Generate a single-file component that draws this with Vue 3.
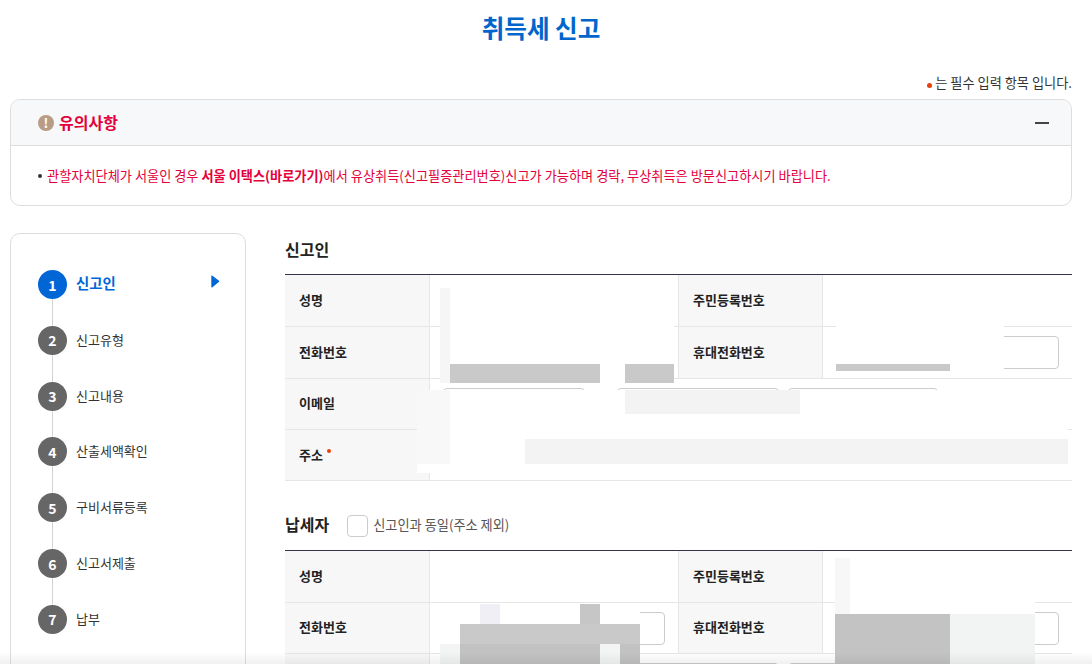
<script setup>
const steps = ['신고인', '신고유형', '신고내용', '산출세액확인', '구비서류등록', '신고서제출', '납부']

const masks = [
  [440, 288, 10, 95, '#f6f6f6'],
  [450, 288, 224, 76, '#fff'],
  [450, 364, 150, 19, '#c9c9c9'],
  [600, 364, 25, 19, '#fff'],
  [625, 364, 49, 19, '#c9c9c9'],
  [450, 383, 224, 3, '#fff'],
  [836, 320, 168, 44, '#fff'],
  [836, 364, 114, 7, '#c9c9c9'],
  [950, 364, 54, 7, '#fff'],
  [836, 371, 168, 6, '#fff'],
  [417, 390, 33, 74, '#f8f8f8'],
  [417, 464, 33, 9, '#fff'],
  [450, 390, 618, 74, '#fff'],
  [625, 390, 175, 24, '#f3f3f3'],
  [525, 439, 543, 25, '#f3f3f3'],
  [440, 603, 200, 41, '#fff'],
  [480, 604, 20, 20, '#f0eff5'],
  [580, 604, 20, 20, '#c6c6c6'],
  [460, 624, 180, 20, '#c9c9c9'],
  [440, 644, 20, 20, '#f3f5f5'],
  [460, 644, 140, 20, '#c1c2c1'],
  [600, 644, 20, 20, '#f3f5f5'],
  [620, 644, 20, 20, '#c1c2c1'],
  [835, 558, 15, 56, '#f7f7f7'],
  [850, 558, 185, 56, '#fff'],
  [835, 614, 115, 50, '#c2c3c2'],
  [950, 614, 85, 50, '#f2f4f4'],
]

function maskStyle(m) {
  return { left: m[0] + 'px', top: m[1] + 'px', width: m[2] + 'px', height: m[3] + 'px', background: m[4] }
}
</script>

<template>
  <div class="page">
    <h1 class="title">취득세 신고</h1>
    <p class="note"><i class="dot"></i>는 필수 입력 항목 입니다.</p>

    <section class="notice">
      <header class="notice-head">
        <span class="warn">!</span>
        <strong>유의사항</strong>
        <i class="minus"></i>
      </header>
      <div class="notice-body">
        <i class="bullet"></i>
        <p>관할자치단체가 서울인 경우 <b>서울 이택스(바로가기)</b>에서 유상취득(신고필증관리번호)신고가 가능하며 경락, 무상취득은 방문신고하시기 바랍니다.</p>
      </div>
    </section>

    <div class="content">
      <aside class="side">
        <ol class="steps">
          <li v-for="(s, i) in steps" :key="s" class="step" :class="{ on: i === 0 }">
            <span class="num">{{ i + 1 }}</span>
            <span class="label">{{ s }}</span>
            <svg v-if="i === 0" class="arrow" width="9" height="13" viewBox="0 0 9 13">
              <path d="M1 1.2 7.6 6.2 1 11.8Z" fill="#0066d6" stroke="#0066d6" stroke-width="1.4" stroke-linejoin="round" />
            </svg>
          </li>
        </ol>
      </aside>

      <main class="main">
        <div class="sec-head"><h2>신고인</h2></div>
        <div class="table">
          <div class="row">
            <div class="th">성명</div><div class="td"></div>
            <div class="th th2">주민등록번호</div><div class="td"></div>
          </div>
          <div class="row">
            <div class="th">전화번호</div>
            <div class="td"><span class="input"></span></div>
            <div class="th th2">휴대전화번호</div>
            <div class="td"><span class="input wide"></span></div>
          </div>
          <div class="row short">
            <div class="th raised">이메일</div>
            <div class="td full mail">
              <span class="input m1"></span>
              <span class="input m2"></span>
              <span class="input m3"></span>
            </div>
          </div>
          <div class="row short">
            <div class="th">주소<i class="dot req"></i></div>
            <div class="td full"></div>
          </div>
        </div>

        <div class="sec-head second">
          <h2>납세자</h2>
          <label class="check"><span class="box"></span><span class="check-text">신고인과 동일(주소 제외)</span></label>
        </div>
        <div class="table">
          <div class="row">
            <div class="th">성명</div><div class="td"></div>
            <div class="th th2">주민등록번호</div><div class="td"></div>
          </div>
          <div class="row short">
            <div class="th raised">전화번호</div>
            <div class="td"><span class="input"></span></div>
            <div class="th th2 raised">휴대전화번호</div>
            <div class="td"><span class="input wide"></span></div>
          </div>
          <div class="row short">
            <div class="th"></div>
            <div class="td full mail">
              <span class="input m1"></span>
              <span class="input m2"></span>
              <span class="input m3"></span>
            </div>
          </div>
        </div>
      </main>
    </div>

    <div v-for="(m, i) in masks" :key="i" class="mask" :style="maskStyle(m)"></div>
    <div class="fade"></div>
  </div>
</template>

<style>
html, body { margin: 0; overflow: hidden; background: #fff; }
</style>

<style scoped>
* { box-sizing: border-box; }
.page {
  position: relative;
  width: 1092px;
  height: 664px;
  overflow: hidden;
  padding: 0 20px 0 10px;
  font-family: "Noto Sans CJK KR", "Noto Sans", sans-serif;
  font-size: 13px;
  color: #333;
  background: #fff;
}
.title {
  margin: 0;
  height: 56px;
  padding-bottom: 1px;
  line-height: 54px;
  text-align: center;
  font-size: 24.6px;
  font-weight: 700;
  color: #0066cc;
}
.note {
  margin: 17px 0 6px;
  height: 20px;
  line-height: 20px;
  text-align: right;
  font-size: 13.2px;
  color: #333;
}
.dot {
  display: inline-block;
  width: 5px;
  height: 5px;
  margin-right: 3px;
  border-radius: 50%;
  background: #e8410c;
  vertical-align: 0;
}
.notice {
  height: 107px;
  border: 1px solid #ddd;
  border-radius: 10px;
  overflow: hidden;
}
.notice-head {
  display: flex;
  align-items: center;
  height: 46px;
  padding: 0 22px 0 27px;
  background: #f7f8fa;
  border-bottom: 1px solid #ddd;
}
.notice-head strong {
  margin-left: 5px;
  padding-bottom: 2px;
  font-size: 16px;
  font-weight: 700;
  color: #e4003a;
}
.warn {
  display: flex;
  align-items: center;
  justify-content: center;
  width: 16px;
  height: 16px;
  border-radius: 50%;
  background: #b99c84;
  color: #fff;
  font-size: 13px;
  font-weight: 700;
}
.minus {
  width: 14px;
  height: 2px;
  margin-left: auto;
  background: #444;
}
.notice-body {
  display: flex;
  align-items: center;
  height: 59px;
  padding: 0 27px 0 27px;
}
.bullet {
  width: 4px;
  height: 4px;
  margin-right: 5px;
  border-radius: 50%;
  background: #333;
}
.notice-body p {
  margin: 0;
  color: #e4003a;
  font-size: 13.2px;
  line-height: 20px;
  white-space: nowrap;
}
.notice-body b { font-weight: 700; }
.content {
  display: flex;
  margin-top: 27px;
}
.side {
  flex: none;
  width: 236px;
  height: 460px;
  margin-right: 39px;
  padding: 36px 0 0 27px;
  border: 1px solid #ddd;
  border-radius: 10px;
}
.steps { list-style: none; margin: 0; padding: 0; }
.step {
  position: relative;
  display: flex;
  align-items: center;
  height: 29px;
  margin-bottom: 26.83px;
  font-size: 13px;
  color: #333;
}
.step:not(:last-child)::after {
  content: "";
  position: absolute;
  left: 14px;
  top: 29px;
  width: 1px;
  height: 27px;
  background: #d4d4d4;
}
.num {
  flex: none;
  display: flex;
  align-items: center;
  justify-content: center;
  width: 29px;
  height: 29px;
  margin-right: 9px;
  border-radius: 50%;
  background: #666;
  color: #fff;
  font-size: 14px;
  font-weight: 700;
}
.label { padding-bottom: 2px; }
.step.on .num { background: #0066d6; }
.step.on .label { padding-bottom: 5px; color: #0066d6; font-size: 14.4px; font-weight: 700; }
.arrow { position: absolute; left: 173px; top: 5px; }
.main { flex: 1; min-width: 0; }
.sec-head {
  display: flex;
  align-items: center;
  height: 41px;
  padding-bottom: 9px;
}
.sec-head.second { height: 69px; padding: 20px 0 0; }
.sec-head h2 {
  margin: 0;
  font-size: 16px;
  font-weight: 700;
  color: #222;
}
.second h2 { padding-bottom: 3px; }
.check {
  display: flex;
  align-items: center;
  margin-left: 18px;
  color: #555;
  font-size: 13.2px;
}
.check-text { padding-bottom: 2px; }
.box {
  width: 21px;
  height: 22px;
  margin-right: 5px;
  border: 1px solid #ccc;
  border-radius: 4px;
}
.table { border-top: 1px solid #33334a; }
.row {
  display: grid;
  grid-template-columns: 145px 248px 145px 1fr;
  height: 52px;
  border-bottom: 1px solid #e6e6e6;
}
.row.short { height: 51px; }
.th {
  display: flex;
  align-items: center;
  padding: 0 0 2px 14px;
  background: #f7f7f7;
  border-right: 1px solid #e6e6e6;
  font-size: 13px;
  font-weight: 700;
  color: #222;
}
.th.raised { padding-bottom: 3px; }
.th2 { border-left: 1px solid #e6e6e6; }
.dot.req { width: 4px; height: 4px; margin: 0 0 7px 4px; }
.td {
  display: flex;
  align-items: center;
  min-width: 0;
  padding: 0 13px;
}
.td.full { grid-column: 2 / 5; }
.input {
  display: block;
  height: 33px;
  width: 235px;
  border: 1px solid #ccc;
  border-radius: 4px;
}
.input.wide { width: 236px; margin-top: 0; }
.mail { align-items: flex-start; padding: 9px 0 0 13px; }
.m1 { width: 142px; }
.m2 { width: 162px; margin-left: 32px; }
.m3 { width: 150px; margin-left: 9px; }
.mask { position: absolute; }
.fade {
  position: absolute;
  left: 0;
  right: 0;
  bottom: 0;
  height: 12px;
  background: linear-gradient(rgba(0, 0, 0, 0), rgba(0, 0, 0, 0.06));
}
</style>
